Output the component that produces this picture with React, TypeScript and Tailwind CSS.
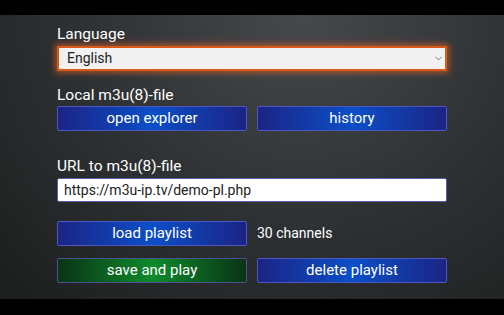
import React from 'react';

const blueBtn =
  'h-[25px] flex items-center justify-center rounded-[2px] border border-[#4d57c4] bg-[linear-gradient(90deg,#1b2485_0%,#0b4fc8_50%,#1b2485_100%)] text-[15px] text-white';
const greenBtn =
  'h-[25px] flex items-center justify-center rounded-[2px] border border-[#4a5296] bg-[linear-gradient(90deg,#0a3315_0%,#0f8a2c_50%,#0a3315_100%)] text-[15px] text-white';

export default function App() {
  return (
    <div className="w-[504px] h-[315px] flex flex-col bg-black font-['Roboto',sans-serif] overflow-hidden">
      <div className="h-[15px] bg-black" />
      <div className="h-[284px] bg-[radial-gradient(ellipse_at_60%_0%,#46494b_0%,#2d3032_55%,#1c1d1d_100%)] pl-[57px] pt-[10px]">
        <div className="w-[390px] flex flex-col">
          <div className="text-[15.5px] leading-[18px] text-white">Language</div>
          <div className="mt-[3px] h-[25px] flex items-center justify-between bg-[#f1f1f1] border-2 border-[#d9581c] shadow-[0_0_6px_2px_rgba(226,98,30,0.65)] pl-[8px] pr-[3px]">
            <span className="text-[14px] text-[#222]">English</span>
            <svg width="7" height="5" viewBox="0 0 7 5">
              <path d="M0.5 0.8 L3.5 4 L6.5 0.8" fill="none" stroke="#888" strokeWidth="1" />
            </svg>
          </div>

          <div className="mt-[15px] text-[15.5px] leading-[18px] text-white">Local m3u(8)-file</div>
          <div className="mt-[2px] grid grid-cols-2 gap-[10px]">
            <div className={blueBtn}>open explorer</div>
            <div className={blueBtn}>history</div>
          </div>

          <div className="mt-[26px] text-[15.5px] leading-[18px] text-white">URL to m3u(8)-file</div>
          <div className="mt-[3px] h-[24px] flex items-center bg-white border border-[#5a5fb0] rounded-[2px] pl-[6px]">
            <span className="text-[14px] text-[#222]">https://m3u-ip.tv/demo-pl.php</span>
          </div>

          <div className="mt-[19px] grid grid-cols-2 gap-[10px]">
            <div className={blueBtn}>load playlist</div>
            <div className="h-[25px] flex items-center text-[14px] text-white">30 channels</div>
          </div>

          <div className="mt-[12px] grid grid-cols-2 gap-[10px]">
            <div className={greenBtn}>save and play</div>
            <div className={blueBtn}>delete playlist</div>
          </div>
        </div>
      </div>
      <div className="h-[16px] bg-black" />
    </div>
  );
}
